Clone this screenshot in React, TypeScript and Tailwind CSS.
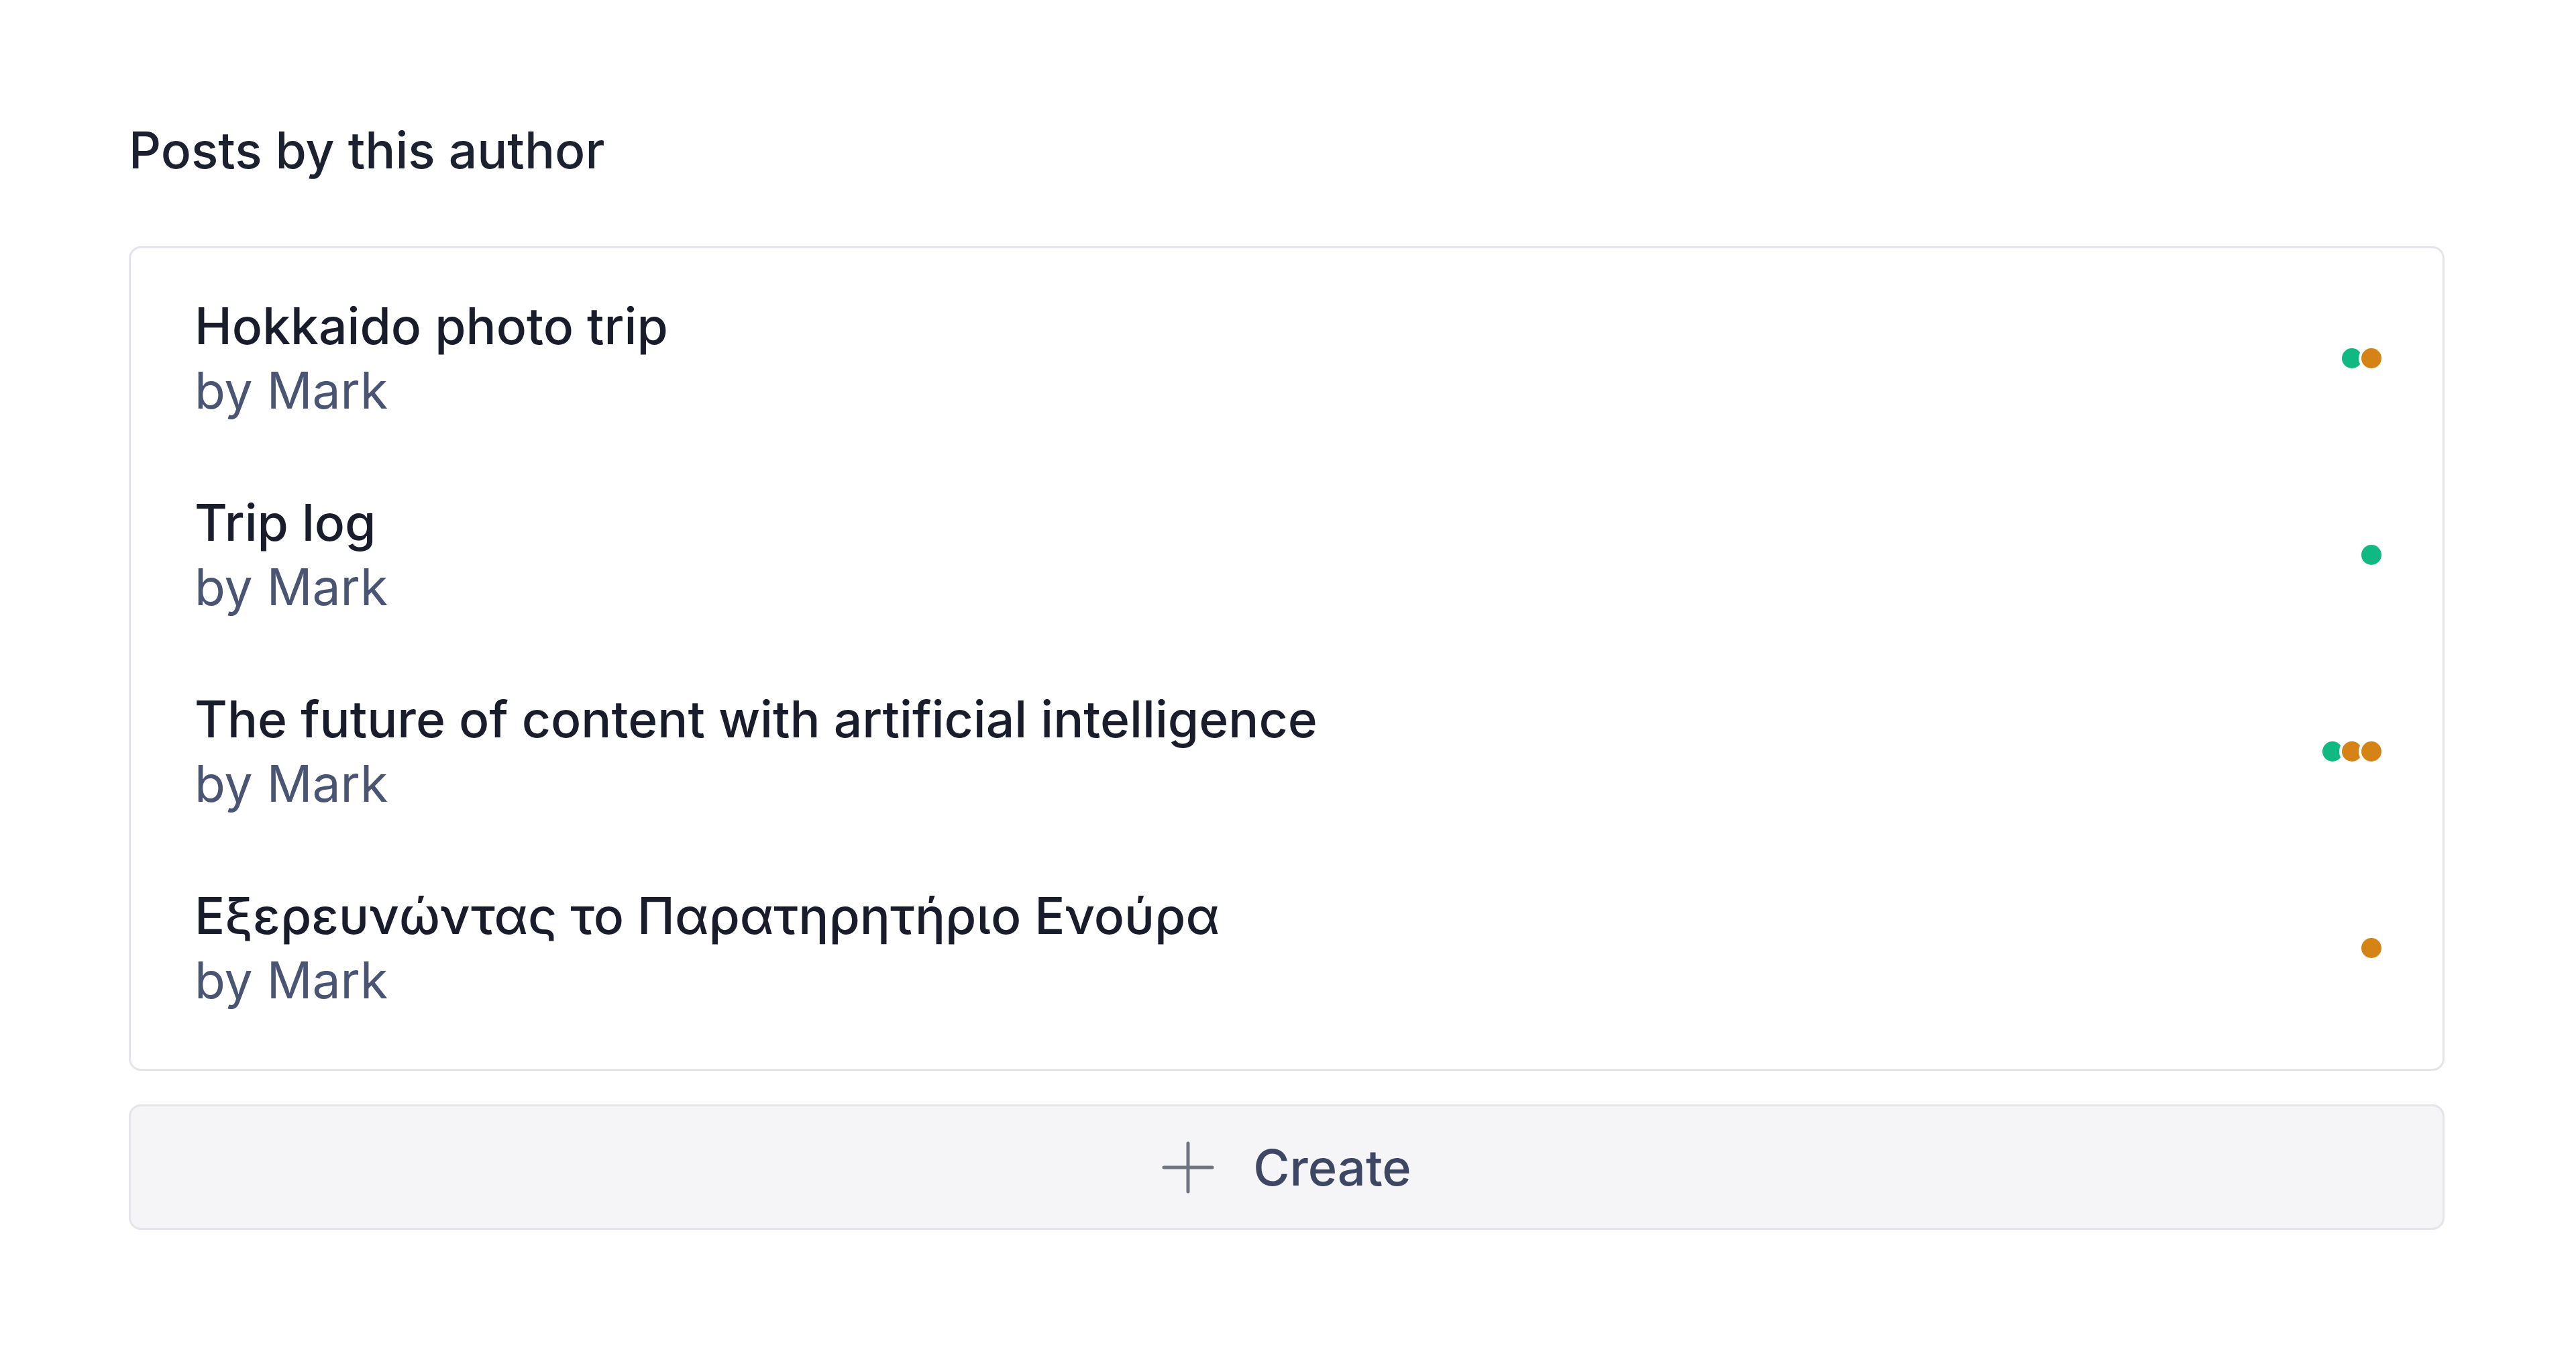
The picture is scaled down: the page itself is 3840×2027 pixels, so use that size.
type Post = {
  title: string;
  author: string;
  dots: ("green" | "orange")[];
};

const posts: Post[] = [
  { title: "Hokkaido photo trip", author: "Mark", dots: ["green", "orange"] },
  { title: "Trip log", author: "Mark", dots: ["green"] },
  {
    title: "The future of content with artificial intelligence",
    author: "Mark",
    dots: ["green", "orange", "orange"],
  },
  {
    title: "Εξερευνώντας το Παρατηρητήριο Ενούρα",
    author: "Mark",
    dots: ["orange"],
  },
];

function StatusDots({ dots }: { dots: Post["dots"] }) {
  return (
    <div className="flex items-center">
      {dots.map((d, i) => (
        <span
          key={i}
          className={
            (d === "green" ? "bg-[#10b981]" : "bg-[#d58314]") +
            " block h-[30px] w-[30px] rounded-full ring-[4px] ring-white " +
            (i > 0 ? "ml-[-1px]" : "")
          }
        />
      ))}
    </div>
  );
}

export default function App() {
  return (
    <div className="min-h-[2027px] bg-white pl-[192px] pr-[196px] pt-[176px] font-['Inter',sans-serif]">
      <h2 className="text-[75px] leading-[96px] font-medium text-[#1c2130]">
        Posts by this author
      </h2>

      <ul className="mt-[95px] rounded-[18px] border-[3px] border-[#e4e4ea] bg-white pt-[17px] pb-[34px]">
        {posts.map((p) => (
          <li
            key={p.title}
            className="flex h-[293px] items-center justify-between pl-[95px] pr-[91px]"
          >
            <div className="flex flex-col">
              <span className="text-[75px] leading-[96px] font-medium text-[#191d2b]">
                {p.title}
              </span>
              <span className="text-[75px] leading-[96px] text-[#4a5574]">
                by {p.author}
              </span>
            </div>
            <StatusDots dots={p.dots} />
          </li>
        ))}
      </ul>

      <button className="mt-[50px] flex h-[187px] w-full items-center justify-center gap-[58px] rounded-[18px] border-[3px] border-[#e4e4ea] bg-[#f5f5f7]">
        <svg
          viewBox="0 0 78 78"
          className="h-[78px] w-[78px] text-[#6e7380]"
          fill="none"
          stroke="currentColor"
          strokeWidth={5}
          strokeLinecap="round"
        >
          <path d="M39 3v72M3 39h72" />
        </svg>
        <span className="text-[74px] leading-[96px] font-medium text-[#3d4663]">
          Create
        </span>
      </button>
    </div>
  );
}
